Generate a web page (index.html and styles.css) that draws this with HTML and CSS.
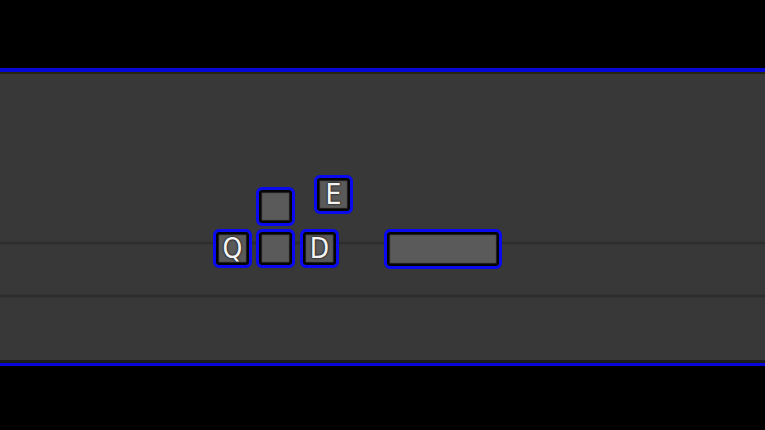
FILE: index.html
```html
<!DOCTYPE html>
<html>
<head>
<meta charset="utf-8">
<link rel="stylesheet" href="styles.css">
</head>
<body>
<div class="spacer"></div>
<div class="panel">
  <div class="edge-top"></div>
  <div class="field">
    <div class="seg seg-a"></div>
    <div class="rule"></div>
    <div class="seg seg-b"></div>
    <div class="rule"></div>
    <div class="seg seg-c"></div>
    <div class="keyboard">
      <div class="row row-top">
        <div class="key key-w"></div>
        <div class="key key-e">E</div>
      </div>
      <div class="row row-bottom">
        <div class="key">Q</div>
        <div class="key key-s"></div>
        <div class="key key-d">D</div>
        <div class="key key-space"></div>
      </div>
    </div>
  </div>
  <div class="edge-bottom"></div>
</div>
</body>
</html>
```
FILE: styles.css
```css
html, body {
  margin: 0;
  padding: 0;
  background: #000;
  width: 765px;
  height: 430px;
  overflow: hidden;
  font-family: "DejaVu Sans Condensed", "DejaVu Sans", "Liberation Sans", sans-serif;
}
.spacer { height: 68px; }
.panel {
  border-top: 4px solid #0707d8;
  border-bottom: 3px solid #0707d8;
}
.edge-top { height: 2px; background: #26260f; }
.edge-bottom { height: 3px; background: #1c1c1c; }
.field {
  position: relative;
  height: 286px;
  background: #383838;
  display: flex;
  flex-direction: column;
}
.seg-a { height: 168px; }
.seg-b { height: 51px; }
.seg-c { flex: 1; }
.rule {
  height: 2px;
  background: #2d2d2d;
  box-shadow: 0 0 2px #2f2f2f;
}
.keyboard {
  position: absolute;
  left: 213px;
  top: 101px;
  display: flex;
  flex-direction: column;
}
.row { display: flex; align-items: flex-start; }
.row-top { height: 54px; }
.key {
  box-sizing: border-box;
  width: 39px;
  height: 39px;
  border: 3px solid #0a0af0;
  border-radius: 6px;
  background: #5a5a5a;
  box-shadow: inset 0 0 0 2px #050505, inset 0 0 1px 3px #1a1a1a;
  color: #f4f4f4;
  font-size: 28px;
  line-height: 1;
  display: flex;
  align-items: center;
  justify-content: center;
  text-shadow: 0 0 1px #222, 0 0 2px #222, 0 0 2px #222;
}
.key-w { margin-left: 43px; margin-top: 12px; }
.key-e { margin-left: 19px; }
.key-s { margin-left: 4px; }
.key-d { margin-left: 5px; }
.key-space { margin-left: 45px; width: 118px; height: 40px; }
```
